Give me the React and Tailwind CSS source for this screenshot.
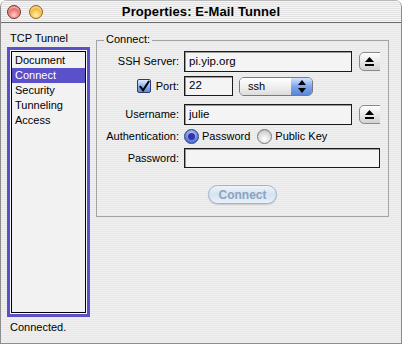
import React from 'react';

const pinstripe = "bg-[repeating-linear-gradient(to_bottom,#efefef_0px,#efefef_1px,#e8e8e8_1px,#e8e8e8_2px)]";

const EjectButton = () => (
    <div className="w-[21px] h-[19px] overflow-hidden ml-[7px] shrink-0">
        <div className="w-[26px] min-w-[26px] h-[19px] rounded-[5px] border border-[#8a8a8a] bg-[linear-gradient(to_bottom,#ffffff,#e6e6e6_55%,#d2d2d2)] flex items-center pl-[5px]">
            <svg width="9" height="10" viewBox="0 0 9 10">
                <polygon points="4.5,0 9,5 0,5" fill="#000" />
                <rect x="0" y="7" width="9" height="2" fill="#000" />
            </svg>
        </div>
    </div>
);

const TextField = ({ value, width, height = 20 }) => (
    <div
        className={`${width} border border-[#1a1a1a] bg-[#f4f4f4] flex items-center pl-[4px] text-[11.5px] shadow-[inset_1px_1px_0_#9a9a9a]`}
        style={{ height }}
    >
        {value}
    </div>
);

const Radio = ({ checked }) => (
    checked ? (
        <div className="w-[15px] h-[15px] rounded-full border border-[#2a3f8a] bg-[radial-gradient(circle_at_50%_35%,#c8dcff,#5a86e0_60%,#2f55b8)] flex items-center justify-center">
            <div className="w-[7px] h-[7px] rounded-full bg-[#3a2fa8]" />
        </div>
    ) : (
        <div className="w-[15px] h-[15px] rounded-full border border-[#7a7a7a] bg-[radial-gradient(circle_at_50%_70%,#ffffff,#d8d8d8_60%,#a8a8a8)]" />
    )
);

const Row = ({ label, children, className = '' }) => (
    <div className={`flex items-center ${className}`}>
        <div className="w-[83px] text-right pr-[1px]">{label}</div>
        <div className="ml-[4px] flex items-center">{children}</div>
    </div>
);

export default function App() {
    const items = ['Document', 'Connect', 'Security', 'Tunneling', 'Access'];

    return (
        <div className="w-[402px] h-[344px] font-['Liberation_Sans',Arial,sans-serif] text-[11px] text-black leading-none">
            <div className={`h-full flex flex-col border-x border-b border-[#8c8c8c] rounded-t-[7px] overflow-hidden ${pinstripe}`}>
                {/* title bar */}
                <div className="relative h-[23px] shrink-0 border-b border-[#6a6a6a] border-t border-t-[#b8b8b8] flex items-center justify-center bg-[repeating-linear-gradient(to_bottom,#f6f6f6_0px,#f6f6f6_1px,#e2e2e2_1px,#e2e2e2_2px)]">
                    <div className="absolute left-[6px] top-[4px] flex gap-[8px]">
                        <div className="w-[14px] h-[14px] rounded-full border border-[#7a3030] bg-[radial-gradient(circle_at_50%_75%,#ffd0c8,#e87068_55%,#b83c38)] shadow-[inset_0_2px_1px_rgba(255,255,255,0.5)]" />
                        <div className="w-[14px] h-[14px] rounded-full border border-[#8a6a20] bg-[radial-gradient(circle_at_50%_75%,#fff3b0,#f7b838_55%,#d88a10)] shadow-[inset_0_2px_1px_rgba(255,255,255,0.5)]" />
                    </div>
                    <div className="font-bold text-[13px] tracking-[0.1px]">Properties: E-Mail Tunnel</div>
                </div>

                {/* body */}
                <div className="flex flex-1">
                    {/* left column */}
                    <div className="w-[89px] pl-[6px] flex flex-col">
                        <div className="mt-[10px] pl-[3px] h-[12px]">TCP Tunnel</div>
                        <div className="mt-[2px] w-[83px] h-[270px] border-[3px] border-[#5a50c8] bg-[#f8f8f8] p-[1px]">
                            <div className="h-full border border-black bg-[#f2f2f2] pt-[1px]">
                                {items.map((item) => (
                                    <div
                                        key={item}
                                        className={`h-[15px] flex items-center pl-[3px] ${item === 'Connect' ? 'bg-[#5a50c8] text-white' : ''}`}
                                    >
                                        {item}
                                    </div>
                                ))}
                            </div>
                        </div>
                        <div className="mt-[5px] pl-[3px]">Connected.</div>
                    </div>

                    {/* group box */}
                    <div className="ml-[6px] mt-[17px] w-[293px] h-[177px] border border-[#a4a4a4] relative flex flex-col">
                        <div className={`absolute -top-[7px] left-[7px] px-[2px] ${pinstripe}`}>Connect:</div>

                        <Row label="SSH Server:" className="mt-[10px]">
                            <TextField value="pi.yip.org" width="w-[168px]" height={21} />
                            <EjectButton />
                        </Row>

                        <div className="flex items-center mt-[4px]">
                            <div className="w-[83px] flex items-center justify-end pr-[1px]">
                                <div className="w-[14px] h-[14px] border border-[#2b3a70] rounded-[2px] bg-[linear-gradient(to_bottom,#e4eeff,#8fb2ee_50%,#5f88d8)] flex items-center justify-center mr-[5px]">
                                    <svg width="13" height="13" viewBox="0 0 13 13">
                                        <path d="M2 6 L5.5 10.5 L12 0.5" stroke="#000" strokeWidth="2.2" fill="none" />
                                    </svg>
                                </div>
                                <span>Port:</span>
                            </div>
                            <div className="ml-[4px] flex items-center">
                                <TextField value="22" width="w-[49px]" height={20} />
                                <div className="ml-[6px] w-[74px] h-[19px] rounded-[5px] border border-[#7a7a7a] flex overflow-hidden">
                                    <div className="flex-1 bg-[linear-gradient(to_bottom,#ffffff,#ececec_60%,#dcdcdc)] flex items-center pl-[8px]">ssh</div>
                                    <div className="w-[21px] bg-[linear-gradient(to_bottom,#d4e4ff,#7ea6ec_50%,#5a86d8)] flex items-center justify-center">
                                        <svg width="8" height="13" viewBox="0 0 8 13">
                                            <polygon points="4,0 8,5 0,5" fill="#000" />
                                            <polygon points="0,8 8,8 4,13" fill="#000" />
                                        </svg>
                                    </div>
                                </div>
                            </div>
                        </div>

                        <Row label="Username:" className="mt-[8px]">
                            <TextField value="julie" width="w-[168px]" height={21} />
                            <EjectButton />
                        </Row>

                        <Row label="Authentication:" className="mt-[3px] h-[16px]">
                            <div className="flex items-center">
                                <Radio checked />
                                <span className="ml-[3px]">Password</span>
                                <div className="ml-[7px]"><Radio /></div>
                                <span className="ml-[3px]">Public Key</span>
                            </div>
                        </Row>

                        <Row label="Password:" className="mt-[4px]">
                            <TextField value="" width="w-[196px]" height={20} />
                        </Row>

                        <div className="flex justify-center mt-[17px]">
                            <div className="w-[69px] h-[19px] rounded-full border border-[#9fb4cc] bg-[linear-gradient(to_bottom,#eef4fb,#d6e3f2_50%,#e9f1fa)] flex items-center justify-center font-bold text-[12px] text-[#8ea3bd] shadow-[0_1px_1px_rgba(0,0,0,0.15)]">
                                Connect
                            </div>
                        </div>
                    </div>
                </div>
            </div>
        </div>
    );
}
